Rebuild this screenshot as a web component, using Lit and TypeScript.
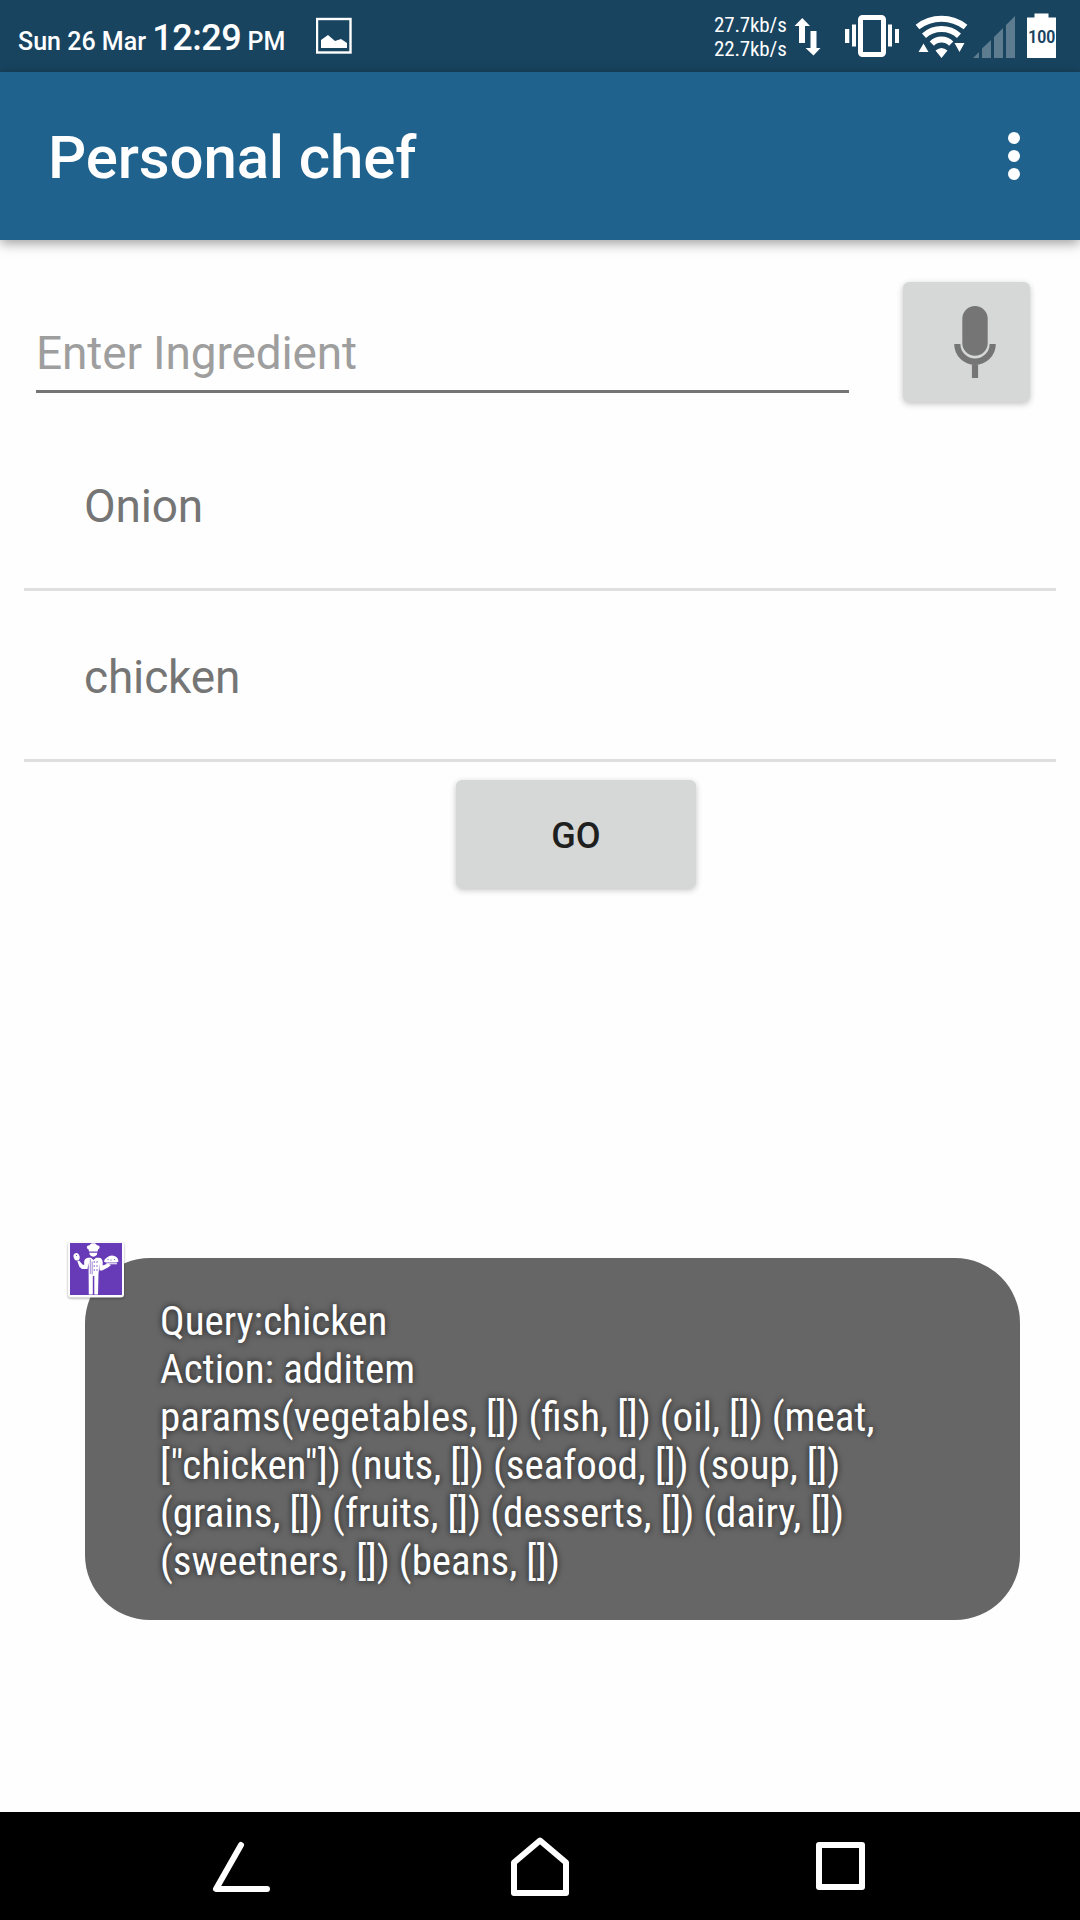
import { LitElement, html, css } from "lit";
import { customElement, state } from "lit/decorators.js";

@customElement("status-bar")
class StatusBar extends LitElement {
  static styles = css`
    :host {
      display: flex;
      box-sizing: border-box;
      height: 72px;
      padding: 0 24px 0 18px;
      background: #184460;
      color: #fff;
    }
    .clock {
      width: 298px;
      padding-top: 1px;
      font-size: 25px;
      font-weight: 500;
      line-height: 75px;
      white-space: nowrap;
    }
    .time {
      font-size: 36px;
      letter-spacing: -0.45px;
    }
    .spacer {
      flex: 1;
    }
    .rates {
      width: 80px;
      padding-top: 13px;
      font-family: "Roboto Condensed", Roboto, sans-serif;
      font-stretch: 75%;
      font-size: 21px;
      line-height: 24px;
      letter-spacing: -0.15px;
      white-space: nowrap;
    }
    .battery-text {
      font: 500 19px "Roboto Condensed", Roboto, sans-serif;
      fill: #184460;
    }
    svg {
      display: block;
    }
  `;
  render() {
    return html`
      <div class="clock">Sun 26 Mar <span class="time">12:29</span> PM</div>
      <svg width="36" height="72" viewBox="316 0 36 72" fill="none">
        <rect x="317" y="19" width="33.5" height="33.5" stroke="#fff" stroke-width="2.4" />
        <path d="M321 48V40L328 35l7 6 6-2 6 4v5z" fill="#fff" />
      </svg>
      <div class="spacer"></div>
      <div class="rates">27.7kb/s<br />22.7kb/s</div>
      <svg width="262" height="72" viewBox="794 0 262 72" fill="#fff">
        <path d="M802.300 18L810 26H805V43H799V26H794.500zM810.500 31H816.500V48H820.500L813.500 55.500 805.500 48H810.500z" />
        <rect x="860.500" y="17.500" width="23" height="37" rx="2" fill="none" stroke="#fff" stroke-width="5" />
        <path d="M845 29h4.300v14H845zM852 24.500h4v22h-4zM888 24.500h4v22h-4zM895 29h4v14h-4z" />
        <g fill="none" stroke="#fff" stroke-width="6">
          <path d="M917.500 27A39 39 0 0 1 965.500 27" />
          <path d="M924 35.700A26.200 26.200 0 0 1 959 35.700" />
          <path d="M931.800 43.600A13.800 13.800 0 0 1 951.200 43.600" />
        </g>
        <path d="M941.500 58L935.500 50.500Q941.500 45.500 947.500 50.500zM918.500 52L923.500 43.500 928.500 52zM954.500 43H964.500L959.500 52z" />
        <g fill="#5d7c8f">
          <path d="M973 58L979 52V58zM982 58V48.500L991 40V58zM994 58V37L1003 28V58zM1006 58V25L1015 16V58z" />
        </g>
        <path d="M1034.500 13.500h14v4h7.500V58h-29V17.500h7.500z" />
        <text class="battery-text" x="1028" y="42.700" textLength="27.500">100</text>
      </svg>
    `;
  }
}

@customElement("app-bar")
class AppBar extends LitElement {
  static styles = css`
    :host {
      display: flex;
      align-items: center;
      justify-content: space-between;
      box-sizing: border-box;
      height: 168px;
      padding: 0 60px 0 48px;
      background: #1f628d;
      color: #fff;
      box-shadow: 0 3px 12px rgba(0, 0, 0, 0.4);
    }
    .title {
      margin: 0;
      padding-top: 4px;
      font-size: 60px;
      font-weight: 500;
      line-height: 70px;
      letter-spacing: -0.15px;
    }
    svg {
      display: block;
    }
  `;
  render() {
    return html`
      <h1 class="title">Personal chef</h1>
      <svg width="12" height="48" fill="#fff">
        <circle cx="6" cy="6" r="6" />
        <circle cx="6" cy="24" r="6" />
        <circle cx="6" cy="42" r="6" />
      </svg>
    `;
  }
}

@customElement("toast-message")
class ToastMessage extends LitElement {
  static styles = css`
    :host {
      display: block;
      position: absolute;
      left: 85px;
      top: 1258px;
      box-sizing: border-box;
      width: 935px;
      height: 362px;
      padding: 39px 75px 0;
      border-radius: 65px;
      background: #666;
      color: #fff;
    }
    .text {
      font-family: "Roboto Condensed", Roboto, sans-serif;
      font-stretch: 75%;
      font-size: 41px;
      line-height: 48px;
      word-spacing: -0.4px;
      white-space: pre;
      text-shadow: 0 0 6px rgba(0, 0, 0, 0.75);
    }
    .badge {
      position: absolute;
      left: -18px;
      top: -17px;
      filter: drop-shadow(0 1px 1px rgba(0, 0, 0, 0.35));
    }
  `;
  @state() private lines = [
    "Query:chicken",
    "Action: additem",
    "params(vegetables, []) (fish, []) (oil, []) (meat,",
    '["chicken"]) (nuts, []) (seafood, []) (soup, [])',
    "(grains, []) (fruits, []) (desserts, []) (dairy, [])",
    "(sweetners, []) (beans, [])",
  ];
  render() {
    return html`
      <div class="text">${this.lines.map((l) => html`<div>${l}</div>`)}</div>
      <svg class="badge" width="58" height="58" viewBox="-3 -2 58 58">
        <rect x="-2" y="-1" width="56" height="55.500" rx="3" fill="#fbfbfb" />
        <rect width="52" height="52" fill="#673ab7" />
        <g fill="#fff">
          <path d="M19 8.500L18.500 6.200C16 5.500 16.500 2 19.500 2.200 20.500 .5 22 .2 23.200 .2S26 .5 27 2.200C30 2 30.500 5.500 28.200 6.200L27.500 8.500z" />
          <path d="M19.300 9.800H27.300Q27 13.500 23.300 13.700 19.600 13.500 19.300 9.800z" />
          <path d="M18 14.800H21L23.500 17 26 14.800H29.500Q32.500 15.500 32.700 19V22.500L38 20.500 41 22 38 24.500 32 27.500H29.500V21L28.500 31 28 51.500H24.300V33H22.800V51.500H18.800L18.600 30V20L17.500 26H12L9.500 24 7.300 18.200 9 17.500 12.500 21.500 14.200 22V18.500Q14.500 15.500 18 14.800z" />
          <ellipse cx="6.600" cy="13.800" rx="3" ry="3.800" transform="rotate(-15 6.600 13.800)" />
          <path d="M34 18.800Q34 16 37 14.500 40 12 43.500 12.800 48.300 14 48.500 18.500L46.500 19.500H36zM36 20.300H47V21.300H37z" />
        </g>
        <path d="M20.300 16V31M22.200 18.500v13" stroke="#673ab7" stroke-width=".6" />
        <g fill="#673ab7">
          <circle cx="24.200" cy="19" r=".7" /><circle cx="27" cy="19" r=".7" />
          <circle cx="24.200" cy="23" r=".7" /><circle cx="27" cy="23" r=".7" />
          <circle cx="24.200" cy="27" r=".7" /><circle cx="27" cy="27" r=".7" />
          <circle cx="38" cy="16.500" r=".6" /><circle cx="41" cy="17" r=".6" /><circle cx="44.500" cy="16.500" r=".6" />
          <circle cx="6.500" cy="12.500" r=".6" />
        </g>
      </svg>
    `;
  }
}

@customElement("nav-bar")
class NavBar extends LitElement {
  static styles = css`
    :host {
      display: flex;
      justify-content: space-between;
      align-items: center;
      box-sizing: border-box;
      height: 108px;
      padding: 0 213px 0 210px;
      background: #000;
    }
    .home {
      margin-right: 7px;
    }
  `;
  render() {
    return html`
      <svg width="64" height="64" viewBox="210 1834 64 64" fill="none" stroke="#fff" stroke-width="6" stroke-linecap="round" stroke-linejoin="round">
        <path d="M241 1845L216 1889H267" />
      </svg>
      <svg class="home" width="64" height="64" viewBox="508 1834 64 64" fill="none" stroke="#fff" stroke-width="6" stroke-linejoin="round">
        <path d="M540 1840.500L566 1862.500V1893H514V1862.500z" />
      </svg>
      <svg width="54" height="64" viewBox="813 1834 54 64" fill="none" stroke="#fff" stroke-width="6" stroke-linejoin="round">
        <path d="M819 1845H862V1887H819z" />
      </svg>
    `;
  }
}

@customElement("app-root")
class AppRoot extends LitElement {
  static styles = css`
    :host {
      display: flex;
      flex-direction: column;
      position: relative;
      width: 1080px;
      height: 1920px;
      overflow: hidden;
      background: #fefefe;
      font-family: Roboto, sans-serif;
    }
    .content {
      flex: 1;
      display: flex;
      flex-direction: column;
      padding: 42px 24px 0;
    }
    .entry {
      display: flex;
      align-items: flex-start;
      height: 138px;
      padding: 0 26px 0 12px;
      justify-content: space-between;
    }
    .field {
      box-sizing: border-box;
      width: 813px;
      height: 111px;
      padding-top: 43px;
      border-bottom: 3px solid #757575;
      color: #9e9e9e;
      font-size: 46px;
      line-height: 56px;
      letter-spacing: -0.15px;
    }
    .button {
      display: flex;
      align-items: center;
      justify-content: center;
      border: 0;
      padding: 0;
      border-radius: 6px;
      background: #d6d8d7;
      box-shadow: 0 2px 6px rgba(0, 0, 0, 0.24);
      font: 500 36px Roboto, sans-serif;
      color: #1e1f1e;
    }
    .mic {
      width: 127px;
      height: 120px;
      padding-left: 17px;
    }
    .go {
      width: 240px;
      height: 108px;
      margin: 18px 0 0 432px;
      padding-top: 3px;
    }
    .row {
      box-sizing: border-box;
      height: 171px;
      padding: 59px 60px 0;
      border-bottom: 3px solid #dfdfdf;
      color: #757575;
      font-size: 46px;
      line-height: 54px;
      letter-spacing: -0.15px;
    }
    app-bar {
      flex: none;
    }
  `;
  @state() private ingredients = ["Onion", "chicken"];
  render() {
    return html`
      <status-bar></status-bar>
      <app-bar></app-bar>
      <main class="content">
        <div class="entry">
          <div class="field">Enter Ingredient</div>
          <button class="button mic" aria-label="Voice input">
            <svg width="44" height="74" viewBox="953 305 44 74">
              <rect x="962.300" y="306" width="25.400" height="49.700" rx="12.700" fill="#757575" />
              <path d="M957.300 344A17.700 17.700 0 0 0 992.700 344M975 362V378" fill="none" stroke="#757575" stroke-width="6.200" />
            </svg>
          </button>
        </div>
        ${this.ingredients.map((name) => html`<div class="row">${name}</div>`)}
        <button class="button go">GO</button>
      </main>
      <nav-bar></nav-bar>
      <toast-message></toast-message>
    `;
  }
}
